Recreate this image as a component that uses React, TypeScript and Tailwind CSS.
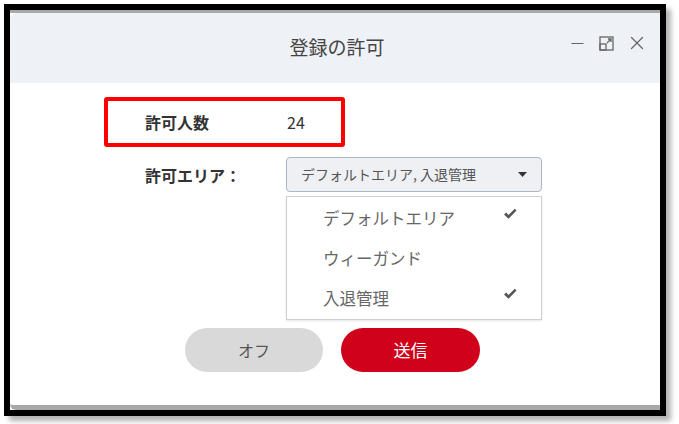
import { Minus, X } from 'lucide-react'

const font = { fontFamily: '"Noto Sans CJK JP", "Noto Sans", sans-serif' }

const areas = [
  { label: 'デフォルトエリア', checked: true },
  { label: 'ウィーガンド', checked: false },
  { label: '入退管理', checked: true },
]

function RestoreIcon() {
  return (
    <svg width="15" height="15" viewBox="0 0 15 15" fill="none" stroke="#666" strokeWidth="1.3">
      <rect x="1" y="1" width="13" height="13" />
      <rect x="1" y="8" width="6" height="6" />
      <path d="M8 7 L12 3 M9 3 H12 V6" />
    </svg>
  )
}

function Check() {
  return (
    <svg width="14" height="12" viewBox="0 0 14 12">
      <path d="M1 6.5 L3.2 4.5 L5.5 7 L11.8 0.8 L13.5 2.5 L5.5 10.8 Z" fill="#555" />
    </svg>
  )
}

export default function App() {
  return (
    <div className="w-[679px] h-[424px] bg-white pt-[4px] pl-[4px]" style={font}>
      <div className="w-[662px] h-[412px] border-[6px] border-black shadow-[5px_5px_5px_rgba(0,0,0,0.3)]">
        <div className="h-full flex flex-col bg-white border-t-[3px] border-b-[5px] border-[#a8a8a8] rounded-bl-[6px]">
          <div className="h-[70px] bg-[#eef1f6] rounded-tl-[6px] flex items-center relative">
            <div className="flex-1 text-center text-[19px] text-[#444] pl-[4px] pb-[2px]">登録の許可</div>
            <div className="absolute right-[12px] top-[19px] flex items-center gap-[12px] text-[#666]">
              <Minus size={19} strokeWidth={1.5} />
              <RestoreIcon />
              <X size={22} strokeWidth={1.4} />
            </div>
          </div>

          <div className="flex flex-col pl-[94px] pt-[14px]">
            <div className="w-[241px] h-[50px] border-[4px] border-[#ff0000] rounded-[3px] flex items-center pl-[37px]">
              <span className="w-[142px] text-[16px] font-bold text-[#333]">許可人数</span>
              <span className="text-[16px] text-[#333]">24</span>
            </div>

            <div className="flex items-center pl-[41px] mt-[10px]">
              <span className="w-[141px] text-[16px] font-bold text-[#333]">許可エリア：</span>
              <div className="relative">
                <div className="w-[256px] h-[35px] bg-[#eef0f3] border border-[#aab7c6] rounded-[4px] flex items-center justify-between pl-[14px] pr-[14px]">
                  <span className="text-[14px] text-[#555]">デフォルトエリア, 入退管理</span>
                  <svg width="9" height="5" viewBox="0 0 9 5"><path d="M0 0 H9 L4.5 5 Z" fill="#333" /></svg>
                </div>
                <div className="absolute left-0 top-[39px] w-[256px] h-[124px] bg-white border border-[#cfcfcf] shadow-[0_1px_2px_rgba(0,0,0,0.1)] flex flex-col py-[1px]">
                  {areas.map((a) => (
                    <div key={a.label} className="h-[40px] flex items-center justify-between pl-[36px] pr-[24px]">
                      <span className="text-[16.5px] text-[#666]">{a.label}</span>
                      {a.checked && <span className="-mt-[8px]"><Check /></span>}
                    </div>
                  ))}
                </div>
              </div>
            </div>
          </div>

          <div className="flex gap-[18px] pl-[175px] mt-[136px]">
            <button className="w-[138px] h-[44px] rounded-full bg-[#d9d9d9] text-[16px] text-[#555]">オフ</button>
            <button className="w-[139px] h-[44px] rounded-full bg-[#d0021b] text-[17px] text-white">送信</button>
          </div>
        </div>
      </div>
    </div>
  )
}
